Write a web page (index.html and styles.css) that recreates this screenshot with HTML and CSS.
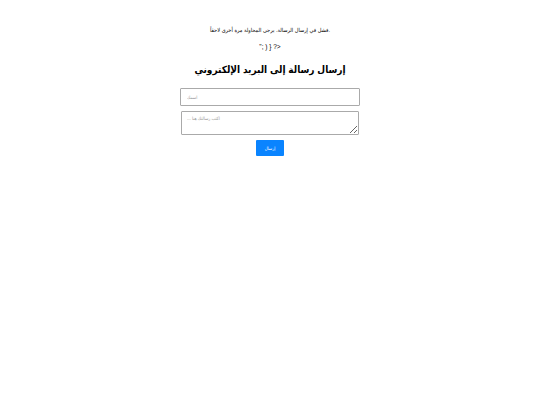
FILE: index.html
```html
<!DOCTYPE html>
<html lang="ar">
<head>
<meta charset="utf-8">
<link rel="stylesheet" href="styles.css">
</head>
<body>
<div class="page">
  <p class="msg">فشل في إرسال الرسالة. يرجى المحاولة مرة أخرى لاحقاً.</p>
  <p class="code">"; ) } ?&gt;</p>
  <h1 class="title">إرسال رسالة إلى البريد الإلكتروني</h1>
  <form class="form">
    <input class="field" type="text" placeholder="اسمك">
    <textarea class="area" placeholder="... اكتب رسالتك هنا"></textarea>
    <button class="send" type="button">إرسال</button>
  </form>
</div>
</body>
</html>
```
FILE: styles.css
```css
html, body {
  margin: 0;
  padding: 0;
  background: #fff;
}
body {
  font-family: "Liberation Sans", "DejaVu Sans Condensed", sans-serif;
  font-stretch: condensed;
  color: #000;
}
.page {
  display: flex;
  flex-direction: column;
  align-items: center;
  padding-top: 26px;
}
.msg {
  margin: 0;
  font-size: 5.6px;
  line-height: 9px;
}
.code {
  margin: 7px 0 0;
  font-size: 6.5px;
  line-height: 9px;
}
.title {
  margin: 11px 0 0;
  font-size: 10px;
  line-height: 16px;
  font-weight: bold;
}
.form {
  display: flex;
  flex-direction: column;
  align-items: center;
  margin-top: 10px;
}
.field {
  box-sizing: border-box;
  width: 180px;
  height: 18px;
  margin: 0;
  padding: 0 6px;
  border: 1px solid #aaa;
  border-radius: 1px;
  font-family: "Liberation Sans", "DejaVu Sans Condensed", sans-serif;
  font-size: 4.5px;
}
.area {
  box-sizing: border-box;
  width: 178px;
  height: 24px;
  margin: 5px 0 0;
  padding: 4px 5px;
  border: 1px solid #aaa;
  border-radius: 1px;
  font-family: "Liberation Sans", "DejaVu Sans Condensed", sans-serif;
  font-size: 4.5px;
  resize: vertical;
}
.field::placeholder, .area::placeholder {
  color: #999;
}
.send {
  box-sizing: border-box;
  width: 28px;
  height: 16px;
  margin-top: 5px;
  padding: 0;
  border: none;
  border-radius: 1px;
  background: #0a84ff;
  color: #fff;
  font-family: "Liberation Sans", "DejaVu Sans Condensed", sans-serif;
  font-size: 4.5px;
}
```
